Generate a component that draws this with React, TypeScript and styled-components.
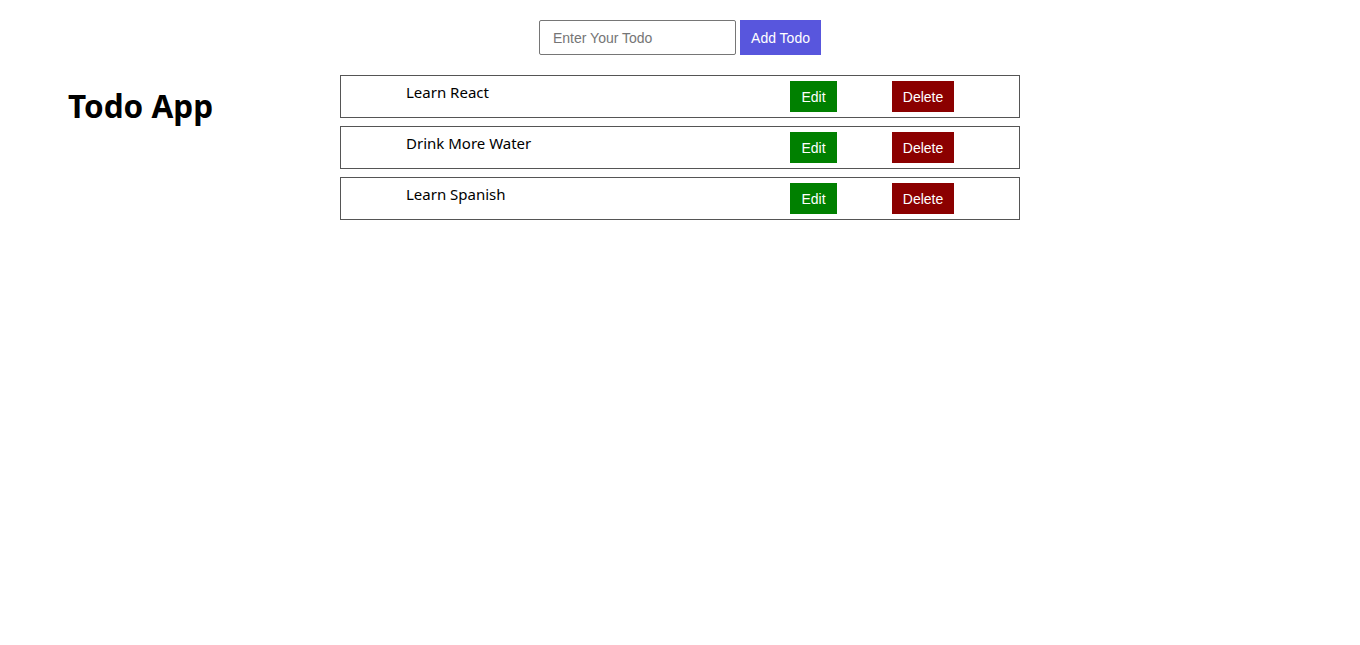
import styled, {createGlobalStyle} from 'styled-components';

const todos = ['Learn React', 'Drink More Water', 'Learn Spanish'];

const GlobalStyle = createGlobalStyle`
  body {
    margin: 0;
    background: #fff;
    font-family: "Noto Sans", "Liberation Sans", sans-serif;
  }
`;

const App = () => {
    return (
        <>
            <GlobalStyle/>
            <Page>
                <AddForm onSubmit={(e) => e.preventDefault()}>
                    <TodoInput type="text" placeholder="Enter Your Todo"/>
                    <AddButton type="submit">Add Todo</AddButton>
                </AddForm>
                <Main>
                    <Title>Todo App</Title>
                    <TodoList>
                        {todos.map((todo) => (
                            <TodoRow key={todo}>
                                <TodoText>{todo}</TodoText>
                                <ActionButton $variant="edit">Edit</ActionButton>
                                <ActionButton $variant="delete">Delete</ActionButton>
                            </TodoRow>
                        ))}
                    </TodoList>
                </Main>
            </Page>
        </>
    );
};

export default App;

const Page = styled.div`
  width: 100%;
  padding-top: 20px;
`;

const AddForm = styled.form`
  display: flex;
  justify-content: center;
  align-items: stretch;
  gap: 4px;
  height: 35px;
`;

const TodoInput = styled.input`
  box-sizing: border-box;
  width: 197px;
  height: 35px;
  padding: 0 13px;
  border: 1px solid #767676;
  border-radius: 2px;
  font-family: "Liberation Sans", Arial, sans-serif;
  font-size: 14px;
  color: #000;

  &::placeholder {
    color: #757575;
  }
`;

const AddButton = styled.button`
  box-sizing: border-box;
  width: 81px;
  height: 35px;
  padding: 0;
  border: none;
  background-color: #5856dd;
  color: #fff;
  font-family: "Liberation Sans", Arial, sans-serif;
  font-size: 14px;
`;

const Main = styled.div`
  display: grid;
  grid-template-columns: 340px 680px;
  margin-top: 20px;
`;

const Title = styled.h1`
  margin: 9px 0 0 68px;
  font-size: 31.5px;
  font-weight: 700;
  color: #000;
`;

const TodoList = styled.ul`
  list-style: none;
  margin: 0;
  padding: 0;
  display: flex;
  flex-direction: column;
  gap: 8px;
`;

const TodoRow = styled.li`
  box-sizing: border-box;
  display: grid;
  grid-template-columns: 384px 102px 62px;
  align-items: center;
  height: 43px;
  padding: 5px 0 5px 65px;
  border: 1px solid #555;
`;

const TodoText = styled.span`
  align-self: start;
  margin-top: 1px;
  font-size: 15px;
  line-height: 20px;
  color: #000;
`;

const ActionButton = styled.button<{ $variant: 'edit' | 'delete' }>`
  box-sizing: border-box;
  justify-self: start;
  width: ${({$variant}) => ($variant === 'edit' ? '47px' : '62px')};
  height: 31px;
  padding: 0;
  border: none;
  background-color: ${({$variant}) => ($variant === 'edit' ? '#008000' : '#8b0000')};
  color: #fff;
  font-family: "Liberation Sans", Arial, sans-serif;
  font-size: 14px;
`;
